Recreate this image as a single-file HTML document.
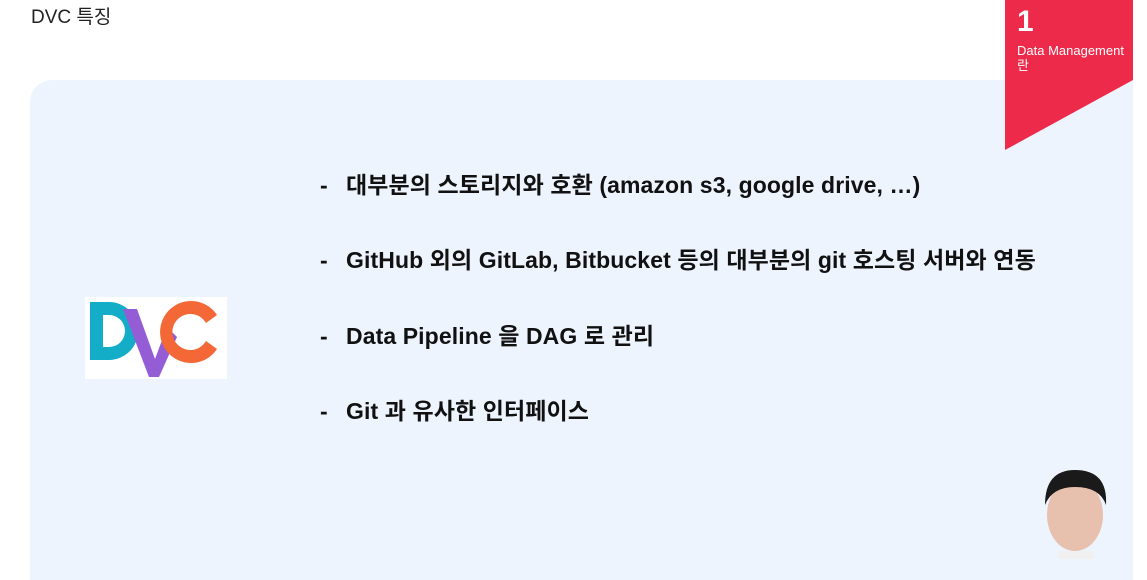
<!DOCTYPE html>
<html><head><meta charset="utf-8"><style>
body{margin:0;width:1147px;height:559px;background:#fff;position:relative;overflow:hidden;font-family:"Liberation Sans","Noto Sans CJK KR",sans-serif}
.t{position:absolute;left:31px;top:2px;font-size:19px;color:#222}
.p{position:absolute;left:30px;top:80px;width:1103px;height:500px;background:#eef4fe;border-radius:22px 0 0 0}
.b{position:absolute;left:320px;font-size:23px;font-weight:bold;color:#111;white-space:nowrap;letter-spacing:0.1px}
.b span{display:inline-block;width:26px}
.logo{position:absolute;left:85px;top:297px;width:142px;height:82px;background:#fff}
</style></head><body>
<div class="t">DVC 특징</div>
<div class="p"></div>
<svg style="position:absolute;left:0;top:0" width="1147" height="559">
<polygon points="1005,0 1133,0 1133,80 1005,150" fill="#ee2a4a"/>
<text x="1017" y="31" font-family="Liberation Sans" font-weight="bold" font-size="30" fill="#fff">1</text>
<text x="1017" y="55" font-family="Liberation Sans" font-size="13" fill="#fff">Data Management</text>
<text x="1017" y="70" font-family="Noto Sans CJK KR" font-size="13" fill="#fff">란</text>
</svg>
<div class="logo"><svg width="142" height="82">
<path d="M5 5 H24 A29 29 0 0 1 24 63 H5 Z M18 18 V50 H24 A16 16 0 0 0 24 18 Z" fill="#13adc7" fill-rule="evenodd"/>
<path d="M38 12 L52 12 L70 62 L82 30 L92 40 L74 80 L64 80 Z" fill="#945dd6"/>
<path d="M132 18 A31 31 0 1 0 132 52 L121 44 A18 18 0 1 1 121 26 Z" fill="#f46737"/>
</svg></div>
<div class="b" style="top:166px"><span>-</span>대부분의 스토리지와 호환 (amazon s3, google drive, …)</div>
<div class="b" style="top:241px"><span>-</span>GitHub 외의 GitLab, Bitbucket 등의 대부분의 git 호스팅 서버와 연동</div>
<div class="b" style="top:317px"><span>-</span>Data Pipeline 을 DAG 로 관리</div>
<div class="b" style="top:392px"><span>-</span>Git 과 유사한 인터페이스</div>
<svg style="position:absolute;left:1030px;top:465px" width="90" height="94">
<ellipse cx="45" cy="50" rx="28" ry="36" fill="#e8c0ae"/>
<path d="M15 40 Q15 5 45 5 Q78 5 76 40 Q70 22 45 22 Q22 22 15 40Z" fill="#1a1a1a"/>
<rect x="28" y="86" width="36" height="8" fill="#f0f0f0"/>
</svg>
</body></html>
